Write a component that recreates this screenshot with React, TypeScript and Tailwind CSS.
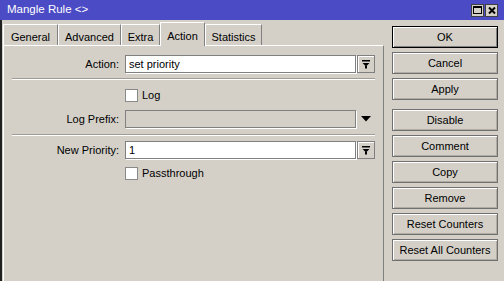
import React from 'react';

const tabs = [
  { label: 'General', w: 'w-[55px]' },
  { label: 'Advanced', w: 'w-[63px]' },
  { label: 'Extra', w: 'w-[39px]' },
  { label: 'Action', w: 'w-[45px]', active: true },
  { label: 'Statistics', w: 'w-[57px]' },
];

const buttons = [
  ['OK', 'Cancel', 'Apply'],
  ['Disable', 'Comment', 'Copy', 'Remove', 'Reset Counters', 'Reset All Counters'],
];

function DropIcon() {
  return (
    <svg width="8" height="9" viewBox="0 0 8 9">
      <rect x="0" y="0" width="8" height="1.5" fill="#000" />
      <polygon points="0.5,3 7.5,3 4,6.5" fill="#000" />
      <rect x="3" y="6" width="2" height="2.5" fill="#000" />
    </svg>
  );
}

function DropButton() {
  return (
    <div className="ml-[1px] w-[18px] h-[18px] flex items-center justify-center bg-[#d4d0c8] border border-[#808080] shadow-[inset_1px_1px_0_#fff]">
      <DropIcon />
    </div>
  );
}

function Field({ label, value, disabled }: { label: string; value?: string; disabled?: boolean }) {
  return (
    <div className="flex items-center h-[18px]">
      <div className="w-[116px] text-right pr-[1px]">{label}</div>
      <div
        className={`ml-[5px] w-[231px] h-[18px] flex items-center pl-[3px] border border-[#808080] shadow-[1px_1px_0_#fff] ${
          disabled ? 'bg-[#d4d0c8]' : 'bg-white'
        }`}
      >
        {value}
      </div>
      {disabled ? (
        <div className="ml-[1px] w-[18px] h-[18px] flex items-center justify-center">
          <svg width="10" height="6" viewBox="0 0 10 6">
            <polygon points="0,0 10,0 5,5.5" fill="#000" />
          </svg>
        </div>
      ) : (
        <DropButton />
      )}
    </div>
  );
}

function Check({ label }: { label: string }) {
  return (
    <div className="flex items-center h-[13px]">
      <div className="ml-[121px] w-[13px] h-[13px] bg-white border border-[#8a8a8a]" />
      <span className="ml-[4px]">{label}</span>
    </div>
  );
}

function Separator() {
  return <div className="ml-[8px] w-[363px] h-[2px] border-t border-[#a09c94] border-b border-b-white" />;
}

export default function App() {
  return (
    <div className="w-[504px] h-[281px] overflow-hidden bg-[#d4d0c8] text-black text-[11px] font-['Liberation_Sans',Arial,sans-serif]">
      {/* title bar */}
      <div className="h-[20px] bg-[#4b4bc5] flex items-center justify-between pl-[7px] pr-[6px]">
        <span className="text-white text-[11.5px] leading-none">Mangle Rule &lt;&gt;</span>
        <div className="flex gap-[1px]">
          <div className="w-[13px] h-[13px] bg-[#d4d0c8] border border-[#404040] flex items-center justify-center">
            <svg width="9" height="8" viewBox="0 0 9 8">
              <rect x="0.5" y="0.5" width="8" height="7" fill="none" stroke="#000" />
              <rect x="0" y="0" width="9" height="2" fill="#000" />
            </svg>
          </div>
          <div className="w-[13px] h-[13px] bg-[#d4d0c8] border border-[#404040] flex items-center justify-center">
            <svg width="8" height="7" viewBox="0 0 8 7">
              <path d="M1 0.5 L7 6.5 M7 0.5 L1 6.5" stroke="#000" strokeWidth="2" />
            </svg>
          </div>
        </div>
      </div>

      <div className="flex h-[261px]">
        {/* window frame */}
        <div className="w-[3px] border-l-2 border-[#202020]" />

        <div className="w-[381px] flex flex-col">
          {/* tabs */}
          <div className="h-[25px] flex items-end">
            {tabs.map((t) =>
              t.active ? (
                <div
                  key={t.label}
                  className={`${t.w} h-[24px] -mb-[1px] relative z-10 bg-[#d4d0c8] border-t border-l border-white border-r border-r-[#808080] flex justify-center pt-[5px]`}
                >
                  {t.label}
                </div>
              ) : (
                <div
                  key={t.label}
                  className={`${t.w} h-[21px] bg-[#d4d0c8] border-t border-l border-white border-r border-r-[#808080] flex justify-center pt-[4px]`}
                >
                  {t.label}
                </div>
              )
            )}
          </div>

          {/* panel */}
          <div className="flex-1 border-t border-l border-white border-r border-r-[#808080]">
            <div className="mt-[9px]">
              <Field label="Action:" value="set priority" />
            </div>
            <div className="mt-[5px]">
              <Separator />
            </div>
            <div className="mt-[9px]">
              <Check label="Log" />
            </div>
            <div className="mt-[8px]">
              <Field label="Log Prefix:" disabled />
            </div>
            <div className="mt-[6px]">
              <Separator />
            </div>
            <div className="mt-[5px]">
              <Field label="New Priority:" value="1" />
            </div>
            <div className="mt-[8px]">
              <Check label="Passthrough" />
            </div>
          </div>
        </div>

        {/* buttons */}
        <div className="ml-[8px] w-[106px] pt-[6px] flex flex-col">
          {buttons.map((group, gi) => (
            <div key={gi} className={`flex flex-col gap-[4px] ${gi === 1 ? 'mt-[9px]' : ''}`}>
              {group.map((b) => (
                <div
                  key={b}
                  className={`h-[22px] flex items-center justify-center border ${
                    b === 'OK'
                      ? 'border-black shadow-[inset_1px_1px_0_#fff,inset_-1px_-1px_0_#808080]'
                      : 'border-[#707070] shadow-[inset_1px_1px_0_#fff,inset_-1px_-1px_0_#b0aca4]'
                  }`}
                >
                  {b}
                </div>
              ))}
            </div>
          ))}
        </div>
      </div>
    </div>
  );
}
